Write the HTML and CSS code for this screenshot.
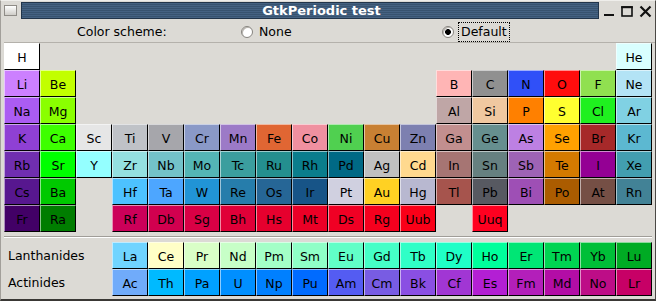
FILE: index.html
```html
<!DOCTYPE html>
<html lang="en">
<head>
    <meta charset="UTF-8">
    <meta name="viewport" content="width=device-width, initial-scale=1.0">
    <title>GtkPeriodic test</title>
    <link rel="stylesheet" href="styles.css">
</head>
<body>
<div class="window">
    <div class="titlebar">
        <span class="win-icon"></span>
        <div class="title-bar"><span class="title">GtkPeriodic test</span></div>
        <svg class="win-buttons" width="56" height="18" viewBox="0 0 56 18">
            <rect x="5" y="13" width="10" height="2" fill="#111"/>
            <rect x="23" y="6" width="10" height="9" fill="none" stroke="#111" stroke-width="1.6"/>
            <rect x="22.2" y="5.2" width="11.6" height="2" fill="#111"/>
            <path d="M41.5 5.5 L51.5 15.5 M51.5 5.5 L41.5 15.5" stroke="#111" stroke-width="2.2"/>
        </svg>
    </div>

    <div class="scheme-row">
        <span class="scheme-label">Color scheme:</span>
        <label class="radio radio-none"><span class="radio-dot"></span><span class="radio-text">None</span></label>
        <label class="radio radio-default"><span class="radio-dot checked"></span><span class="radio-text focused">Default</span></label>
    </div>
    <div class="rule"></div>

    <div class="table">
        <div class="cell el-h">H</div>
        <div class="cell el-he c18">He</div>

        <div class="cell el-li">Li</div>
        <div class="cell el-be">Be</div>
        <div class="cell el-b c13">B</div>
        <div class="cell el-c">C</div>
        <div class="cell el-n">N</div>
        <div class="cell el-o">O</div>
        <div class="cell el-f">F</div>
        <div class="cell el-ne">Ne</div>

        <div class="cell el-na">Na</div>
        <div class="cell el-mg">Mg</div>
        <div class="cell el-al c13">Al</div>
        <div class="cell el-si">Si</div>
        <div class="cell el-p">P</div>
        <div class="cell el-s">S</div>
        <div class="cell el-cl">Cl</div>
        <div class="cell el-ar">Ar</div>

        <div class="cell el-k">K</div>
        <div class="cell el-ca">Ca</div>
        <div class="cell el-sc">Sc</div>
        <div class="cell el-ti">Ti</div>
        <div class="cell el-v">V</div>
        <div class="cell el-cr">Cr</div>
        <div class="cell el-mn">Mn</div>
        <div class="cell el-fe">Fe</div>
        <div class="cell el-co">Co</div>
        <div class="cell el-ni">Ni</div>
        <div class="cell el-cu">Cu</div>
        <div class="cell el-zn">Zn</div>
        <div class="cell el-ga">Ga</div>
        <div class="cell el-ge">Ge</div>
        <div class="cell el-as">As</div>
        <div class="cell el-se">Se</div>
        <div class="cell el-br">Br</div>
        <div class="cell el-kr">Kr</div>

        <div class="cell el-rb">Rb</div>
        <div class="cell el-sr">Sr</div>
        <div class="cell el-y">Y</div>
        <div class="cell el-zr">Zr</div>
        <div class="cell el-nb">Nb</div>
        <div class="cell el-mo">Mo</div>
        <div class="cell el-tc">Tc</div>
        <div class="cell el-ru">Ru</div>
        <div class="cell el-rh">Rh</div>
        <div class="cell el-pd">Pd</div>
        <div class="cell el-ag">Ag</div>
        <div class="cell el-cd">Cd</div>
        <div class="cell el-in">In</div>
        <div class="cell el-sn">Sn</div>
        <div class="cell el-sb">Sb</div>
        <div class="cell el-te">Te</div>
        <div class="cell el-i">I</div>
        <div class="cell el-xe">Xe</div>

        <div class="cell el-cs">Cs</div>
        <div class="cell el-ba">Ba</div>
        <div class="cell el-hf c4">Hf</div>
        <div class="cell el-ta">Ta</div>
        <div class="cell el-w">W</div>
        <div class="cell el-re">Re</div>
        <div class="cell el-os">Os</div>
        <div class="cell el-ir">Ir</div>
        <div class="cell el-pt">Pt</div>
        <div class="cell el-au">Au</div>
        <div class="cell el-hg">Hg</div>
        <div class="cell el-tl">Tl</div>
        <div class="cell el-pb">Pb</div>
        <div class="cell el-bi">Bi</div>
        <div class="cell el-po">Po</div>
        <div class="cell el-at">At</div>
        <div class="cell el-rn">Rn</div>

        <div class="cell el-fr">Fr</div>
        <div class="cell el-ra">Ra</div>
        <div class="cell el-rf c4">Rf</div>
        <div class="cell el-db">Db</div>
        <div class="cell el-sg">Sg</div>
        <div class="cell el-bh">Bh</div>
        <div class="cell el-hs">Hs</div>
        <div class="cell el-mt">Mt</div>
        <div class="cell el-ds">Ds</div>
        <div class="cell el-rg">Rg</div>
        <div class="cell el-uub">Uub</div>
        <div class="cell el-uuq c14">Uuq</div>
    </div>

    <div class="separator"></div>

    <div class="series">
        <div class="series-row">
            <span class="series-label">Lanthanides</span>
            <div class="cell el-la">La</div>
            <div class="cell el-ce">Ce</div>
            <div class="cell el-pr">Pr</div>
            <div class="cell el-nd">Nd</div>
            <div class="cell el-pm">Pm</div>
            <div class="cell el-sm">Sm</div>
            <div class="cell el-eu">Eu</div>
            <div class="cell el-gd">Gd</div>
            <div class="cell el-tb">Tb</div>
            <div class="cell el-dy">Dy</div>
            <div class="cell el-ho">Ho</div>
            <div class="cell el-er">Er</div>
            <div class="cell el-tm">Tm</div>
            <div class="cell el-yb">Yb</div>
            <div class="cell el-lu">Lu</div>
        </div>
        <div class="series-row">
            <span class="series-label">Actinides</span>
            <div class="cell el-ac">Ac</div>
            <div class="cell el-th">Th</div>
            <div class="cell el-pa">Pa</div>
            <div class="cell el-u">U</div>
            <div class="cell el-np">Np</div>
            <div class="cell el-pu">Pu</div>
            <div class="cell el-am">Am</div>
            <div class="cell el-cm">Cm</div>
            <div class="cell el-bk">Bk</div>
            <div class="cell el-cf">Cf</div>
            <div class="cell el-es">Es</div>
            <div class="cell el-fm">Fm</div>
            <div class="cell el-md">Md</div>
            <div class="cell el-no">No</div>
            <div class="cell el-lr">Lr</div>
        </div>
    </div>
</div>
</body>
</html>
```

FILE: styles.css
```css
body {
    margin: 0;
    padding: 0;
    font-family: "DejaVu Sans", sans-serif;
    font-size: 12.5px;
    color: #000;
    background: #dcdad5;
}
.window {
    box-sizing: border-box;
    width: 656px;
    height: 301px;
    background: #dcdad5;
    border-top: 1px solid #efeeeb;
    border-left: 1px solid #a29f9a;
    border-right: 1px solid #4a4845;
    border-bottom: 2px solid #3a3835;
    overflow: hidden;
}

/* window decoration */
.titlebar {
    display: flex;
    align-items: flex-start;
    height: 20px;
    padding-left: 3px;
}
.win-icon {
    box-sizing: border-box;
    width: 13px;
    height: 11px;
    margin-top: 4px;
    margin-right: 4px;
    border: 1px solid #8f8c87;
    background: linear-gradient(#ffffff, #cfcdc8);
}
.title-bar {
    box-sizing: border-box;
    width: 578px;
    height: 17px;
    margin-top: 1px;
    border: 1px solid #22354a;
    background: repeating-linear-gradient(#456282 0, #456282 1px, #38536f 1px, #38536f 2px);
    display: flex;
    justify-content: center;
    padding-left: 23px;
}
.title {
    color: #fff;
    font-weight: bold;
    font-size: 13px;
    line-height: 15px;
}
.win-buttons {
    display: block;
}

/* colour scheme row */
.scheme-row {
    display: flex;
    align-items: center;
    height: 21px;
    padding-left: 76px;
}
.scheme-label {
    width: 164px;
}
.radio {
    display: flex;
    align-items: center;
}
.radio-none {
    width: 201px;
}
.radio-dot {
    box-sizing: border-box;
    width: 12px;
    height: 12px;
    border-radius: 50%;
    border: 1px solid #86837e;
    background: #fff;
    box-shadow: inset 1px 1px 0 #b9b6b0;
}
.radio-dot.checked {
    background: radial-gradient(circle, #000 0, #000 2.6px, #fff 3.2px);
}
.radio-none .radio-text {
    margin-left: 6px;
}
.radio-default .radio-text {
    margin-left: 4px;
}
.focused {
    border: 1px dotted #000;
    padding: 1px 2px 2px 2px;
}
.rule {
    height: 1px;
    margin: 0 0 0 3px;
    background: #b4b1ab;
}

/* periodic table */
.table {
    display: grid;
    grid-template-columns: repeat(18, 36px);
    grid-auto-rows: 27px;
    margin-left: 3px;
}
.cell {
    box-sizing: border-box;
    width: 36px;
    height: 27px;
    padding-top: 2px;
    line-height: 23px;
    text-align: center;
    border-top: 1px solid rgba(255, 255, 255, 0.55);
    border-left: 1px solid rgba(255, 255, 255, 0.55);
    border-right: 1px solid #000;
    border-bottom: 1px solid #000;
}
.c4 { grid-column-start: 4; }
.c13 { grid-column-start: 13; }
.c14 { grid-column-start: 14; }
.c18 { grid-column-start: 18; }

.separator {
    height: 1px;
    margin: 4px 3px 4px 3px;
    background: #a09d98;
    border-bottom: 1px solid #fff;
}
.series-row {
    display: flex;
    height: 27px;
}
.series-label {
    width: 104px;
    padding-left: 7px;
    line-height: 27px;
}

/* element colours */
.el-h { background: #ffffff; }
.el-he { background: #d9ffff; }
.el-li { background: #cc80ff; }
.el-be { background: #c2ff00; }
.el-b { background: #ffb5b5; }
.el-c { background: #909090; }
.el-n { background: #3050f8; }
.el-o { background: #ff0d0d; }
.el-f { background: #90e050; }
.el-ne { background: #b3e3f5; }
.el-na { background: #ab5cf2; }
.el-mg { background: #8aff00; }
.el-al { background: #bfa6a6; }
.el-si { background: #f0c8a0; }
.el-p { background: #ff8000; }
.el-s { background: #ffff30; }
.el-cl { background: #1ff01f; }
.el-ar { background: #80d1e3; }
.el-k { background: #8f40d4; }
.el-ca { background: #3dff00; }
.el-sc { background: #e6e6e6; }
.el-ti { background: #bfc2c7; }
.el-v { background: #a6a6ab; }
.el-cr { background: #8a99c7; }
.el-mn { background: #9c7ac7; }
.el-fe { background: #e06633; }
.el-co { background: #f090a0; }
.el-ni { background: #50d050; }
.el-cu { background: #c88033; }
.el-zn { background: #7d80b0; }
.el-ga { background: #c28f8f; }
.el-ge { background: #668f8f; }
.el-as { background: #bd80e3; }
.el-se { background: #ffa100; }
.el-br { background: #a62929; }
.el-kr { background: #5cb8d1; }
.el-rb { background: #702eb0; }
.el-sr { background: #00ff00; }
.el-y { background: #94ffff; }
.el-zr { background: #94e0e0; }
.el-nb { background: #73c2c9; }
.el-mo { background: #54b5b5; }
.el-tc { background: #3b9e9e; }
.el-ru { background: #248f8f; }
.el-rh { background: #0a7d8c; }
.el-pd { background: #006985; }
.el-ag { background: #c0c0c0; }
.el-cd { background: #ffd98f; }
.el-in { background: #a67573; }
.el-sn { background: #668080; }
.el-sb { background: #9e63b5; }
.el-te { background: #d47a00; }
.el-i { background: #940094; }
.el-xe { background: #429eb0; }
.el-cs { background: #57178f; }
.el-ba { background: #00c900; }
.el-hf { background: #4dc2ff; }
.el-ta { background: #4da6ff; }
.el-w { background: #2194d6; }
.el-re { background: #267dab; }
.el-os { background: #266696; }
.el-ir { background: #175487; }
.el-pt { background: #d0d0e0; }
.el-au { background: #ffd123; }
.el-hg { background: #b8b8d0; }
.el-tl { background: #a6544d; }
.el-pb { background: #575961; }
.el-bi { background: #9e4fb5; }
.el-po { background: #ab5c00; }
.el-at { background: #754f45; }
.el-rn { background: #428296; }
.el-fr { background: #420066; }
.el-ra { background: #007d00; }
.el-rf { background: #cc0059; }
.el-db { background: #d1004f; }
.el-sg { background: #d90045; }
.el-bh { background: #e00038; }
.el-hs { background: #e6002e; }
.el-mt { background: #eb0026; }
.el-ds { background: #f00024; }
.el-rg { background: #f5001e; }
.el-uub { background: #fa0018; }
.el-uuq { background: #ff0020; }
.el-la { background: #70d4ff; }
.el-ce { background: #ffffc7; }
.el-pr { background: #d9ffc7; }
.el-nd { background: #c7ffc7; }
.el-pm { background: #a3ffc7; }
.el-sm { background: #8fffc7; }
.el-eu { background: #61ffc7; }
.el-gd { background: #45ffc7; }
.el-tb { background: #30ffc7; }
.el-dy { background: #1fffc7; }
.el-ho { background: #00ff9c; }
.el-er { background: #00e675; }
.el-tm { background: #00d452; }
.el-yb { background: #00bf38; }
.el-lu { background: #00ab24; }
.el-ac { background: #70abfa; }
.el-th { background: #00baff; }
.el-pa { background: #00a1ff; }
.el-u { background: #008fff; }
.el-np { background: #0080ff; }
.el-pu { background: #006bff; }
.el-am { background: #545cf2; }
.el-cm { background: #785ce3; }
.el-bk { background: #8a4fe3; }
.el-cf { background: #a136d4; }
.el-es { background: #b31fd4; }
.el-fm { background: #b31fba; }
.el-md { background: #b30da6; }
.el-no { background: #bd0d87; }
.el-lr { background: #c70066; }
```
